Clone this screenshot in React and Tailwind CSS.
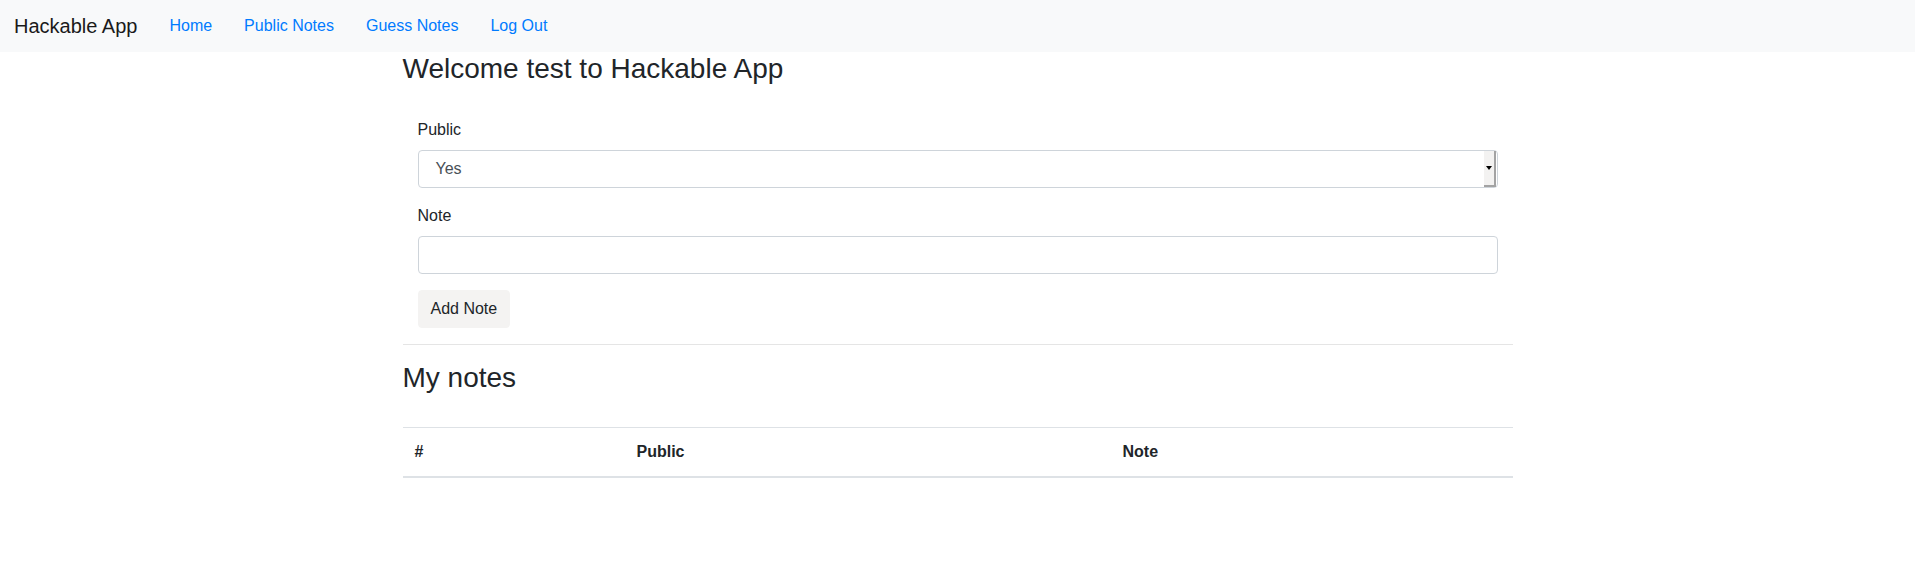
import React from "react";

const NavBar = () => {
  return (
    <nav className="h-[52px] bg-[#f8f9fa] flex items-center pl-[14px]">
      <a className="text-[20px] leading-[30px] text-[#1a1a1a] mr-4">Hackable App</a>
      <a className="px-4 py-2 text-base leading-6 text-[#007bff]">Home</a>
      <a className="px-4 py-2 text-base leading-6 text-[#007bff]">Public Notes</a>
      <a className="px-4 py-2 text-base leading-6 text-[#007bff]">Guess Notes</a>
      <a className="px-4 py-2 text-base leading-6 text-[#007bff]">Log Out</a>
    </nav>
  );
};

const NoteForm = () => {
  return (
    <form className="pt-[24px] px-[15px]">
      <div className="mb-4">
        <label className="block mb-2 leading-6">Public</label>
        <div className="h-[38px] border border-[#ced4da] rounded-[4px] flex items-stretch pr-[1px]">
          <span className="flex-1 pl-[17px] leading-[36px] text-[#495057]">Yes</span>
          <span className="w-[12px] bg-[#f3f2f1] border-r-2 border-b-2 border-[#a3a3a3] flex items-center justify-center">
            <span className="w-0 h-0 border-l-[3px] border-r-[3px] border-t-[4px] border-l-transparent border-r-transparent border-t-black"></span>
          </span>
        </div>
      </div>
      <div className="mb-4">
        <label className="block mb-2 leading-6">Note</label>
        <input className="block w-full h-[38px] border border-[#ced4da] rounded-[4px] px-3 outline-none" />
      </div>
      <button
        type="button"
        className="h-[38px] px-3 rounded-[4px] bg-[#f4f3f2] text-[#212529] leading-6 border border-[#f4f3f2]"
      >
        Add Note
      </button>
    </form>
  );
};

export default function App() {
  return (
    <div className="min-h-[585px] bg-white text-[#212529] font-['Liberation_Sans',Arial,sans-serif] text-base">
      <NavBar />
      <div className="w-[1110px] mx-auto">
        <h3 className="text-[28px] leading-[1.2] font-normal mb-2">Welcome test to Hackable App</h3>
        <NoteForm />
        <hr className="my-4 border-0 border-t border-[#e5e5e5]" />
        <h3 className="text-[28px] leading-[1.2] font-normal mb-2">My notes</h3>
        <table className="w-full mt-[33px] border-collapse text-left">
          <thead>
            <tr>
              <th className="w-[222px] p-3 leading-6 font-bold border-t border-[#dee2e6] border-b-2">#</th>
              <th className="w-[486px] p-3 leading-6 font-bold border-t border-[#dee2e6] border-b-2">Public</th>
              <th className="p-3 leading-6 font-bold border-t border-[#dee2e6] border-b-2">Note</th>
            </tr>
          </thead>
          <tbody></tbody>
        </table>
      </div>
    </div>
  );
}
